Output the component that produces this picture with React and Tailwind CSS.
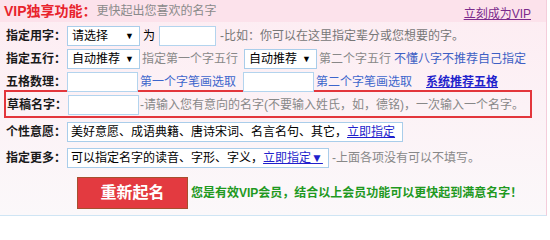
import React from 'react';

const font = { fontFamily: '"Liberation Sans", "Noto Sans CJK SC", sans-serif' };

const Select = ({ value, className = '' }) => (
  <div className={`flex h-[20px] w-[73px] items-center justify-between border border-[#a9cdea] bg-white pl-[4px] pr-[5px] text-[12px] text-black ${className}`}>
    <span>{value}</span>
    <span className="text-[9px]">▼</span>
  </div>
);

const Input = ({ className = '' }) => (
  <div className={`h-[20px] border border-[#b3d4ee] bg-white ${className}`} />
);

const Label = ({ children }) => (
  <span className="w-[61px] shrink-0 text-[12px] font-bold text-[#1a1a1a]">{children}</span>
);

export default function App() {
  return (
    <div style={font} className="h-[216px] w-[547px] border-r border-b border-r-[#f4cddb] border-b-[#cfe5f4] bg-gradient-to-b from-[#fdecf2] to-[#fbf8fa] text-[12px] leading-none">
      {/* header */}
      <div className="flex h-[22px] items-center bg-[#fce2eb] pl-[4px] pr-[15px]">
        <span className="text-[14px] font-bold text-[#e8232c]">VIP独享功能：</span>
        <span className="text-[12px] text-[#8a8a8a]">更快起出您喜欢的名字</span>
        <a href="#" className="ml-auto mt-[5px] text-[12px] text-[#7b2a8c] underline">立刻成为VIP</a>
      </div>

      <div className="pl-[6px]">
        <div className="mt-[4px] flex h-[20px] items-center">
          <Label>指定用字：</Label>
          <Select value="请选择" />
          <span className="ml-[3px] w-[16px] text-black">为</span>
          <Input className="w-[57px]" />
          <span className="ml-[4px] text-[#777]">-比如：你可以在这里指定辈分或您想要的字。</span>
        </div>

        <div className="mt-[3px] flex h-[20px] items-center">
          <Label>指定五行：</Label>
          <Select value="自动推荐" />
          <span className="ml-[2px] text-[#888]">指定第一个字五行</span>
          <Select value="自动推荐" className="ml-[6px]" />
          <span className="ml-[2px] text-[#888]">第二个字五行</span>
          <span className="ml-[3px] text-[#3d5fc4]">不懂八字不推荐自己指定</span>
        </div>

        <div className="mt-[3px] flex h-[19px] items-center">
          <Label>五格数理：</Label>
          <Input className="h-[19px] w-[71px]" />
          <span className="ml-[2px] text-[#3d66cc]">第一个字笔画选取</span>
          <Input className="ml-[7px] h-[19px] w-[71px]" />
          <span className="ml-[2px] text-[#3d66cc]">第二个字笔画选取</span>
          <a href="#" className="ml-[14px] font-bold text-[#1f1fcc] underline">系统推荐五格</a>
        </div>

        <div className="-ml-[2px] mt-[-1px] flex h-[28px] w-[528px] items-center border-2 border-[#e3363c] pl-[1px] pt-[2px]">
          <Label>草稿名字：</Label>
          <Input className="h-[19px] w-[71px]" />
          <span className="ml-[1px] text-[#888]">-请输入您有意向的名字(不要输入姓氏，如，德铭)，一次输入一个名字。</span>
        </div>

        <div className="mt-[4px] flex h-[20px] items-center">
          <Label>个性意愿：</Label>
          <div className="flex h-[20px] w-[336px] items-center border border-[#a9cdea] bg-white pl-[3px] text-black">
            美好意愿、成语典籍、唐诗宋词、名言名句、其它，
            <a href="#" className="text-[#1f1fcc] underline">立即指定</a>
          </div>
        </div>

        <div className="mt-[6px] flex h-[20px] items-center">
          <Label>指定更多：</Label>
          <div className="flex h-[20px] w-[262px] items-center border border-[#a9cdea] bg-white pl-[3px] text-black">
            可以指定名字的读音、字形、字义，
            <a href="#" className="text-[#1f1fcc] underline">立即指定▼</a>
          </div>
          <span className="ml-[3px] text-[#888]">-上面各项没有可以不填写。</span>
        </div>

        <div className="mt-[9px] flex h-[32px] items-center">
          <button className="ml-[71px] flex h-[32px] w-[111px] items-center justify-center border border-[#a5502e] bg-[#e33a40] text-[16px] font-bold text-white">
            重新起名
          </button>
          <span className="ml-[3px] font-bold text-[#1f991f]">您是有效VIP会员，结合以上会员功能可以更快起到满意名字！</span>
        </div>
      </div>
    </div>
  );
}
